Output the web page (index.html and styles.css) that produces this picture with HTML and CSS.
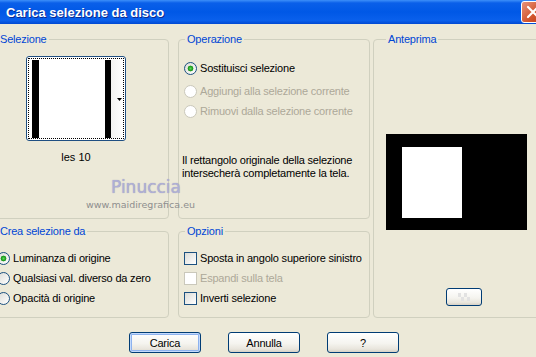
FILE: index.html
```html
<!DOCTYPE html>
<html>
<head>
	<title>Carica selezione da disco</title>
	<link rel="stylesheet" href="styles.css">
</head>
<body>
	<div class="window">
		<div class="titlebar">
			<span class="title">Carica selezione da disco</span>
			<span class="close">
				<svg width="22" height="20" viewBox="0 0 22 20"><path d="M6 5 L16 15 M16 5 L6 15" stroke="#fff" stroke-width="2.2" stroke-linecap="round"/></svg>
			</span>
		</div>
		<div class="content">
			<div class="groups">
				<fieldset class="group sel">
					<legend>Selezione</legend>
					<div class="thumb-wrap">
						<div class="thumb">
							<div class="thumb-in">
								<span class="bar"></span>
								<span class="fill"></span>
								<span class="bar bar-r"></span>
								<span class="drop"><svg width="5" height="3" viewBox="0 0 5 3"><path d="M0 0 H5 L2.5 3 Z" fill="#000"/></svg></span>
							</div>
						</div>
						<div class="caption">les 10</div>
					</div>
				</fieldset>

				<fieldset class="group op">
					<legend>Operazione</legend>
					<div class="rows">
						<label class="row first"><input type="radio" class="radio" name="op" checked>Sostituisci selezione</label>
						<label class="row disabled"><input type="radio" class="radio" name="op" disabled>Aggiungi alla selezione corrente</label>
						<label class="row disabled"><input type="radio" class="radio" name="op" disabled>Rimuovi dalla selezione corrente</label>
					</div>
					<p class="note">Il rettangolo originale della selezione<br>intersecherà completamente la tela.</p>
				</fieldset>

				<fieldset class="group prev">
					<legend>Anteprima</legend>
					<div class="canvas"><span class="canvas-sel"></span></div>
					<button class="btn btn-small">
						<svg width="12" height="8" viewBox="0 0 12 8"><path d="M0 0h3v4H0z M6 0h3v4H6z M3 4h3v4H3z M9 4h3v4H9z" fill="#e2e2e2"/></svg>
					</button>
				</fieldset>

				<fieldset class="group crea">
					<legend>Crea selezione da</legend>
					<div class="rows">
						<label class="row"><input type="radio" class="radio" name="src" checked>Luminanza di origine</label>
						<label class="row"><input type="radio" class="radio" name="src">Qualsiasi val. diverso da zero</label>
						<label class="row"><input type="radio" class="radio" name="src">Opacità di origine</label>
					</div>
				</fieldset>

				<fieldset class="group opt">
					<legend>Opzioni</legend>
					<div class="rows">
						<label class="row"><input type="checkbox" class="check">Sposta in angolo superiore sinistro</label>
						<label class="row disabled"><input type="checkbox" class="check" disabled>Espandi sulla tela</label>
						<label class="row"><input type="checkbox" class="check">Inverti selezione</label>
					</div>
				</fieldset>
			</div>

			<div class="buttons">
				<button class="btn btn-default">Carica</button>
				<button class="btn">Annulla</button>
				<button class="btn">?</button>
			</div>
		</div>

		<div class="watermark">
			<div class="wm-name">Pinuccia</div>
			<div class="wm-url">www.maidiregrafica.eu</div>
		</div>
	</div>
</body>
</html>
```

FILE: styles.css
```css
body {
	margin:0;
	width:536px;
	height:357px;
	overflow:hidden;
	background:#ece9d8;
	font:11px "Liberation Sans", Arial, sans-serif;
	letter-spacing:-0.2px;
	color:#000;
}

.window {
	position:relative;
	height:357px;
}

/* title bar */
.titlebar {
	height:24px;
	display:flex;
	align-items:center;
	padding-left:6px;
	overflow:hidden;
	background:linear-gradient(#3d8ff9 0, #0a5fe9 3px, #0058e6 50%, #0a60ec 85%, #0049d2 100%);
}
.title {
	flex:1;
	color:#fff;
	font-size:13px;
	font-weight:bold;
	letter-spacing:0;
	text-shadow:1px 1px 0 #0c2a8f;
}
.close {
	flex:0 0 22px;
	height:20px;
	align-self:flex-start;
	margin-top:1px;
	margin-right:-9px;
	border:1px solid #fff;
	border-radius:3px;
	background:linear-gradient(135deg, #e8937a, #d1532c 60%, #c0401a);
}
.close svg {
	display:block;
}

/* groups */
.content {
	padding-top:9px;
}
.groups {
	display:grid;
	grid-template-columns:178px 192px 174px;
	grid-template-rows:186px 93px;
	column-gap:9px;
	row-gap:6px;
	margin-left:-9px;
}
.group {
	margin:0;
	padding:0 6px;
	border:1px solid #d0d0bf;
	border-radius:4px;
	min-width:0;
	box-sizing:border-box;
}
.group legend {
	padding:0 2px;
	color:#0046d5;
	line-height:13px;
}
.sel { grid-column:1; grid-row:1; }
.op { grid-column:2; grid-row:1; }
.prev { grid-column:3; grid-row:1 / 3; margin-left:-6px; padding-left:12px; }
.crea { grid-column:1; grid-row:2; }
.opt { grid-column:2; grid-row:2; }

/* selection thumbnail */
.thumb-wrap {
	width:100px;
	margin:10px 0 0 28px;
	text-align:center;
}
.thumb {
	height:85px;
	padding:1px;
	border:1px solid #1f4f82;
	border-radius:3px;
	background:#fff;
	box-sizing:border-box;
}
.thumb-in {
	display:flex;
	height:100%;
	padding:1px 0 0 3px;
	border:1px dotted #000;
	box-sizing:border-box;
}
.bar {
	width:7px;
	background:#000;
}
.bar-r {
	width:6px;
}
.fill {
	width:66px;
	background:#fff;
}
.drop {
	flex:1;
	display:flex;
	align-items:center;
	justify-content:flex-end;
	padding-right:1px;
	background:linear-gradient(90deg, #f3f3f1, #fff);
}
.drop svg {
	display:block;
}
.caption {
	margin-top:10px;
	line-height:13px;
	letter-spacing:0;
}

/* rows of controls */
.rows {
	padding-top:10px;
}
.op .rows {
	padding-top:12px;
}
.row {
	display:flex;
	align-items:center;
	gap:3px;
	height:20px;
	white-space:nowrap;
}
.row.first {
	margin-bottom:3px;
}
.row.disabled {
	color:#aca899;
}
.note {
	margin:33px 0 0 -3px;
	line-height:13px;
}

.radio, .check {
	appearance:none;
	-webkit-appearance:none;
	flex:0 0 13px;
	width:13px;
	height:13px;
	margin:0 0 0 -1px;
	border:1px solid #1c5180;
	box-sizing:border-box;
	background:linear-gradient(135deg, #dcdcd7, #fff);
}
.radio {
	border-radius:50%;
}
.radio:checked {
	background:radial-gradient(circle, #5fd85b 0, #21a121 2px, #1d931d 2.6px, transparent 3.2px), linear-gradient(135deg, #dcdcd7, #fff);
}
.radio:disabled, .check:disabled {
	border-color:#cac8bb;
	background:#fff;
}

/* preview */
.canvas {
	width:141px;
	height:96px;
	margin-top:88px;
	padding:13px 0 0 16px;
	box-sizing:border-box;
	background:#000;
}
.canvas-sel {
	display:block;
	width:60px;
	height:71px;
	background:#fff;
}

/* buttons */
.btn {
	width:72px;
	height:21px;
	padding:0;
	border:1px solid #003c74;
	border-radius:3px;
	background:linear-gradient(#fff 0%, #f5f4ef 55%, #e8e5dc 85%, #d6d0c5 100%);
	font:11px "Liberation Sans", Arial, sans-serif;
	letter-spacing:-0.2px;
	color:#000;
}
.btn-default {
	box-shadow:inset 0 0 0 1px #c4dafc, inset 0 0 0 2px #8db2ee;
}
.btn-small {
	display:flex;
	align-items:center;
	justify-content:center;
	width:36px;
	height:18px;
	margin:58px 0 0 60px;
}
.buttons {
	display:flex;
	gap:27px;
	margin-top:14px;
	padding-left:129px;
}

/* watermark over the dialog */
.watermark {
	position:absolute;
	left:80px;
	top:177px;
	width:130px;
	text-align:center;
	pointer-events:none;
	font-family:"DejaVu Sans", sans-serif;
	letter-spacing:0;
}
.wm-name {
	padding-left:2px;
	font-size:17px;
	line-height:20px;
	color:#afafd6;
	text-shadow:0 0 1px #9a9ab0;
}
.wm-url {
	margin:2px 0 0 -9px;
	font-size:9.5px;
	line-height:11px;
	color:#8e8e8e;
}
```
